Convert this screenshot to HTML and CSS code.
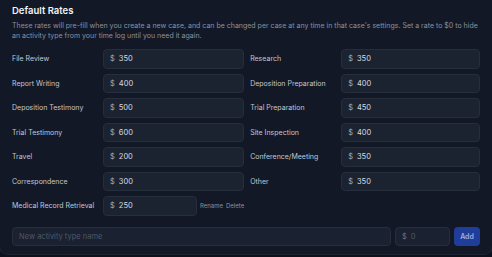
FILE: index.html
```html
<!DOCTYPE html>
<html lang="en">
<head>
  <meta charset="UTF-8">
  <meta name="viewport" content="width=device-width, initial-scale=1.0">
  <title>Default Rates</title>
  <link rel="stylesheet" href="styles.css">
</head>
<body>

  <!-- Rates Card -->
  <section class="card">
    <h2 class="card-title">Default Rates</h2>
    <p class="card-desc">These rates will pre-fill when you create a new case, and can be changed per case at any time in that case's settings. Set a rate to $0 to hide an activity type from your time log until you need it again.</p>

    <!-- Rate Grid -->
    <div class="rates">
      <div class="rate-row">
        <label class="rate-label">File Review</label>
        <div class="rate-input"><span class="cur">$</span><span class="val">350</span></div>
      </div>
      <div class="rate-row">
        <label class="rate-label">Research</label>
        <div class="rate-input"><span class="cur">$</span><span class="val">350</span></div>
      </div>

      <div class="rate-row">
        <label class="rate-label">Report Writing</label>
        <div class="rate-input"><span class="cur">$</span><span class="val">400</span></div>
      </div>
      <div class="rate-row">
        <label class="rate-label">Deposition Preparation</label>
        <div class="rate-input"><span class="cur">$</span><span class="val">400</span></div>
      </div>

      <div class="rate-row">
        <label class="rate-label">Deposition Testimony</label>
        <div class="rate-input"><span class="cur">$</span><span class="val">500</span></div>
      </div>
      <div class="rate-row">
        <label class="rate-label">Trial Preparation</label>
        <div class="rate-input"><span class="cur">$</span><span class="val">450</span></div>
      </div>

      <div class="rate-row">
        <label class="rate-label">Trial Testimony</label>
        <div class="rate-input"><span class="cur">$</span><span class="val">600</span></div>
      </div>
      <div class="rate-row">
        <label class="rate-label">Site Inspection</label>
        <div class="rate-input"><span class="cur">$</span><span class="val">400</span></div>
      </div>

      <div class="rate-row">
        <label class="rate-label">Travel</label>
        <div class="rate-input"><span class="cur">$</span><span class="val">200</span></div>
      </div>
      <div class="rate-row">
        <label class="rate-label">Conference/Meeting</label>
        <div class="rate-input"><span class="cur">$</span><span class="val">350</span></div>
      </div>

      <div class="rate-row">
        <label class="rate-label">Correspondence</label>
        <div class="rate-input"><span class="cur">$</span><span class="val">300</span></div>
      </div>
      <div class="rate-row">
        <label class="rate-label">Other</label>
        <div class="rate-input"><span class="cur">$</span><span class="val">350</span></div>
      </div>

      <!-- Custom type -->
      <div class="rate-row custom">
        <label class="rate-label">Medical Record Retrieval</label>
        <div class="rate-input short"><span class="cur">$</span><span class="val">250</span></div>
        <div class="row-actions">
          <button class="link-btn">Rename</button>
          <button class="link-btn">Delete</button>
        </div>
      </div>
    </div>

    <!-- Add new type -->
    <div class="add-row">
      <div class="field name-field">New activity type name</div>
      <div class="field amount-field"><span class="cur">$</span><span class="ph">0</span></div>
      <button class="add-btn">Add</button>
    </div>
  </section>

</body>
</html>
```

FILE: styles.css
```css
/*--------------------------------------------------------------
# Global Styles
--------------------------------------------------------------*/
* {
  margin: 0;
  padding: 0;
  box-sizing: border-box;
}

body {
  font-family: Inter, "Noto Sans", sans-serif;
  background-color: #0c111c;
  color: #c9ced6;
  width: 492px;
  height: 257px;
  overflow: hidden;
}

/*--------------------------------------------------------------
# Card
--------------------------------------------------------------*/
.card {
  background: #121826;
  border: 1px solid #1d2432;
  border-top: none;
  border-radius: 0 0 9px 9px;
  padding: 4px 12px 8px 12px;
  margin-right: -1px;
  margin-left: -1px;
}

.card-title {
  font-size: 9.5px;
  font-weight: 600;
  color: #f1f4f8;
  line-height: 14px;
}

.card-desc {
  margin-top: 3px;
  font-size: 7px;
  line-height: 10px;
  color: #8a92a0;
}

/*--------------------------------------------------------------
# Rates Grid
--------------------------------------------------------------*/
.rates {
  margin-top: 8px;
  display: grid;
  grid-template-columns: 1fr 1fr;
  column-gap: 6px;
  row-gap: 5px;
}

.rate-row {
  display: grid;
  grid-template-columns: 91px 1fr;
  align-items: center;
}

.rate-row.custom {
  grid-template-columns: 91px 94px auto;
}

.rate-label {
  font-size: 7px;
  color: #c2c8d1;
}

.rate-input {
  height: 19.5px;
  background: #1b2230;
  border: 1px solid #262e3d;
  border-radius: 4px;
  display: flex;
  align-items: center;
  gap: 4px;
  padding-left: 6px;
  font-size: 7.5px;
  color: #d7dbe2;
}

.cur {
  color: #a3aab6;
}

.row-actions {
  display: flex;
  gap: 3px;
  padding-left: 3px;
}

.link-btn {
  background: none;
  border: none;
  font-family: inherit;
  font-size: 6px;
  color: #8a92a0;
  cursor: pointer;
}

/*--------------------------------------------------------------
# Add Row
--------------------------------------------------------------*/
.add-row {
  margin-top: 11px;
  display: flex;
  gap: 4px;
}

.field {
  height: 19.5px;
  background: #1a2130;
  border: 1px solid #262e3d;
  border-radius: 4px;
  display: flex;
  align-items: center;
  gap: 4px;
  padding-left: 6px;
  font-size: 7.5px;
  color: #4f5868;
}

.name-field {
  flex: 1;
}

.amount-field {
  width: 55px;
}

.amount-field .cur {
  color: #6b7382;
}

.add-btn {
  width: 26px;
  height: 19.5px;
  background: #1f3d99;
  border: none;
  border-radius: 4px;
  font-family: inherit;
  font-size: 7px;
  font-weight: 600;
  color: #9fb1dc;
  cursor: pointer;
}
```
